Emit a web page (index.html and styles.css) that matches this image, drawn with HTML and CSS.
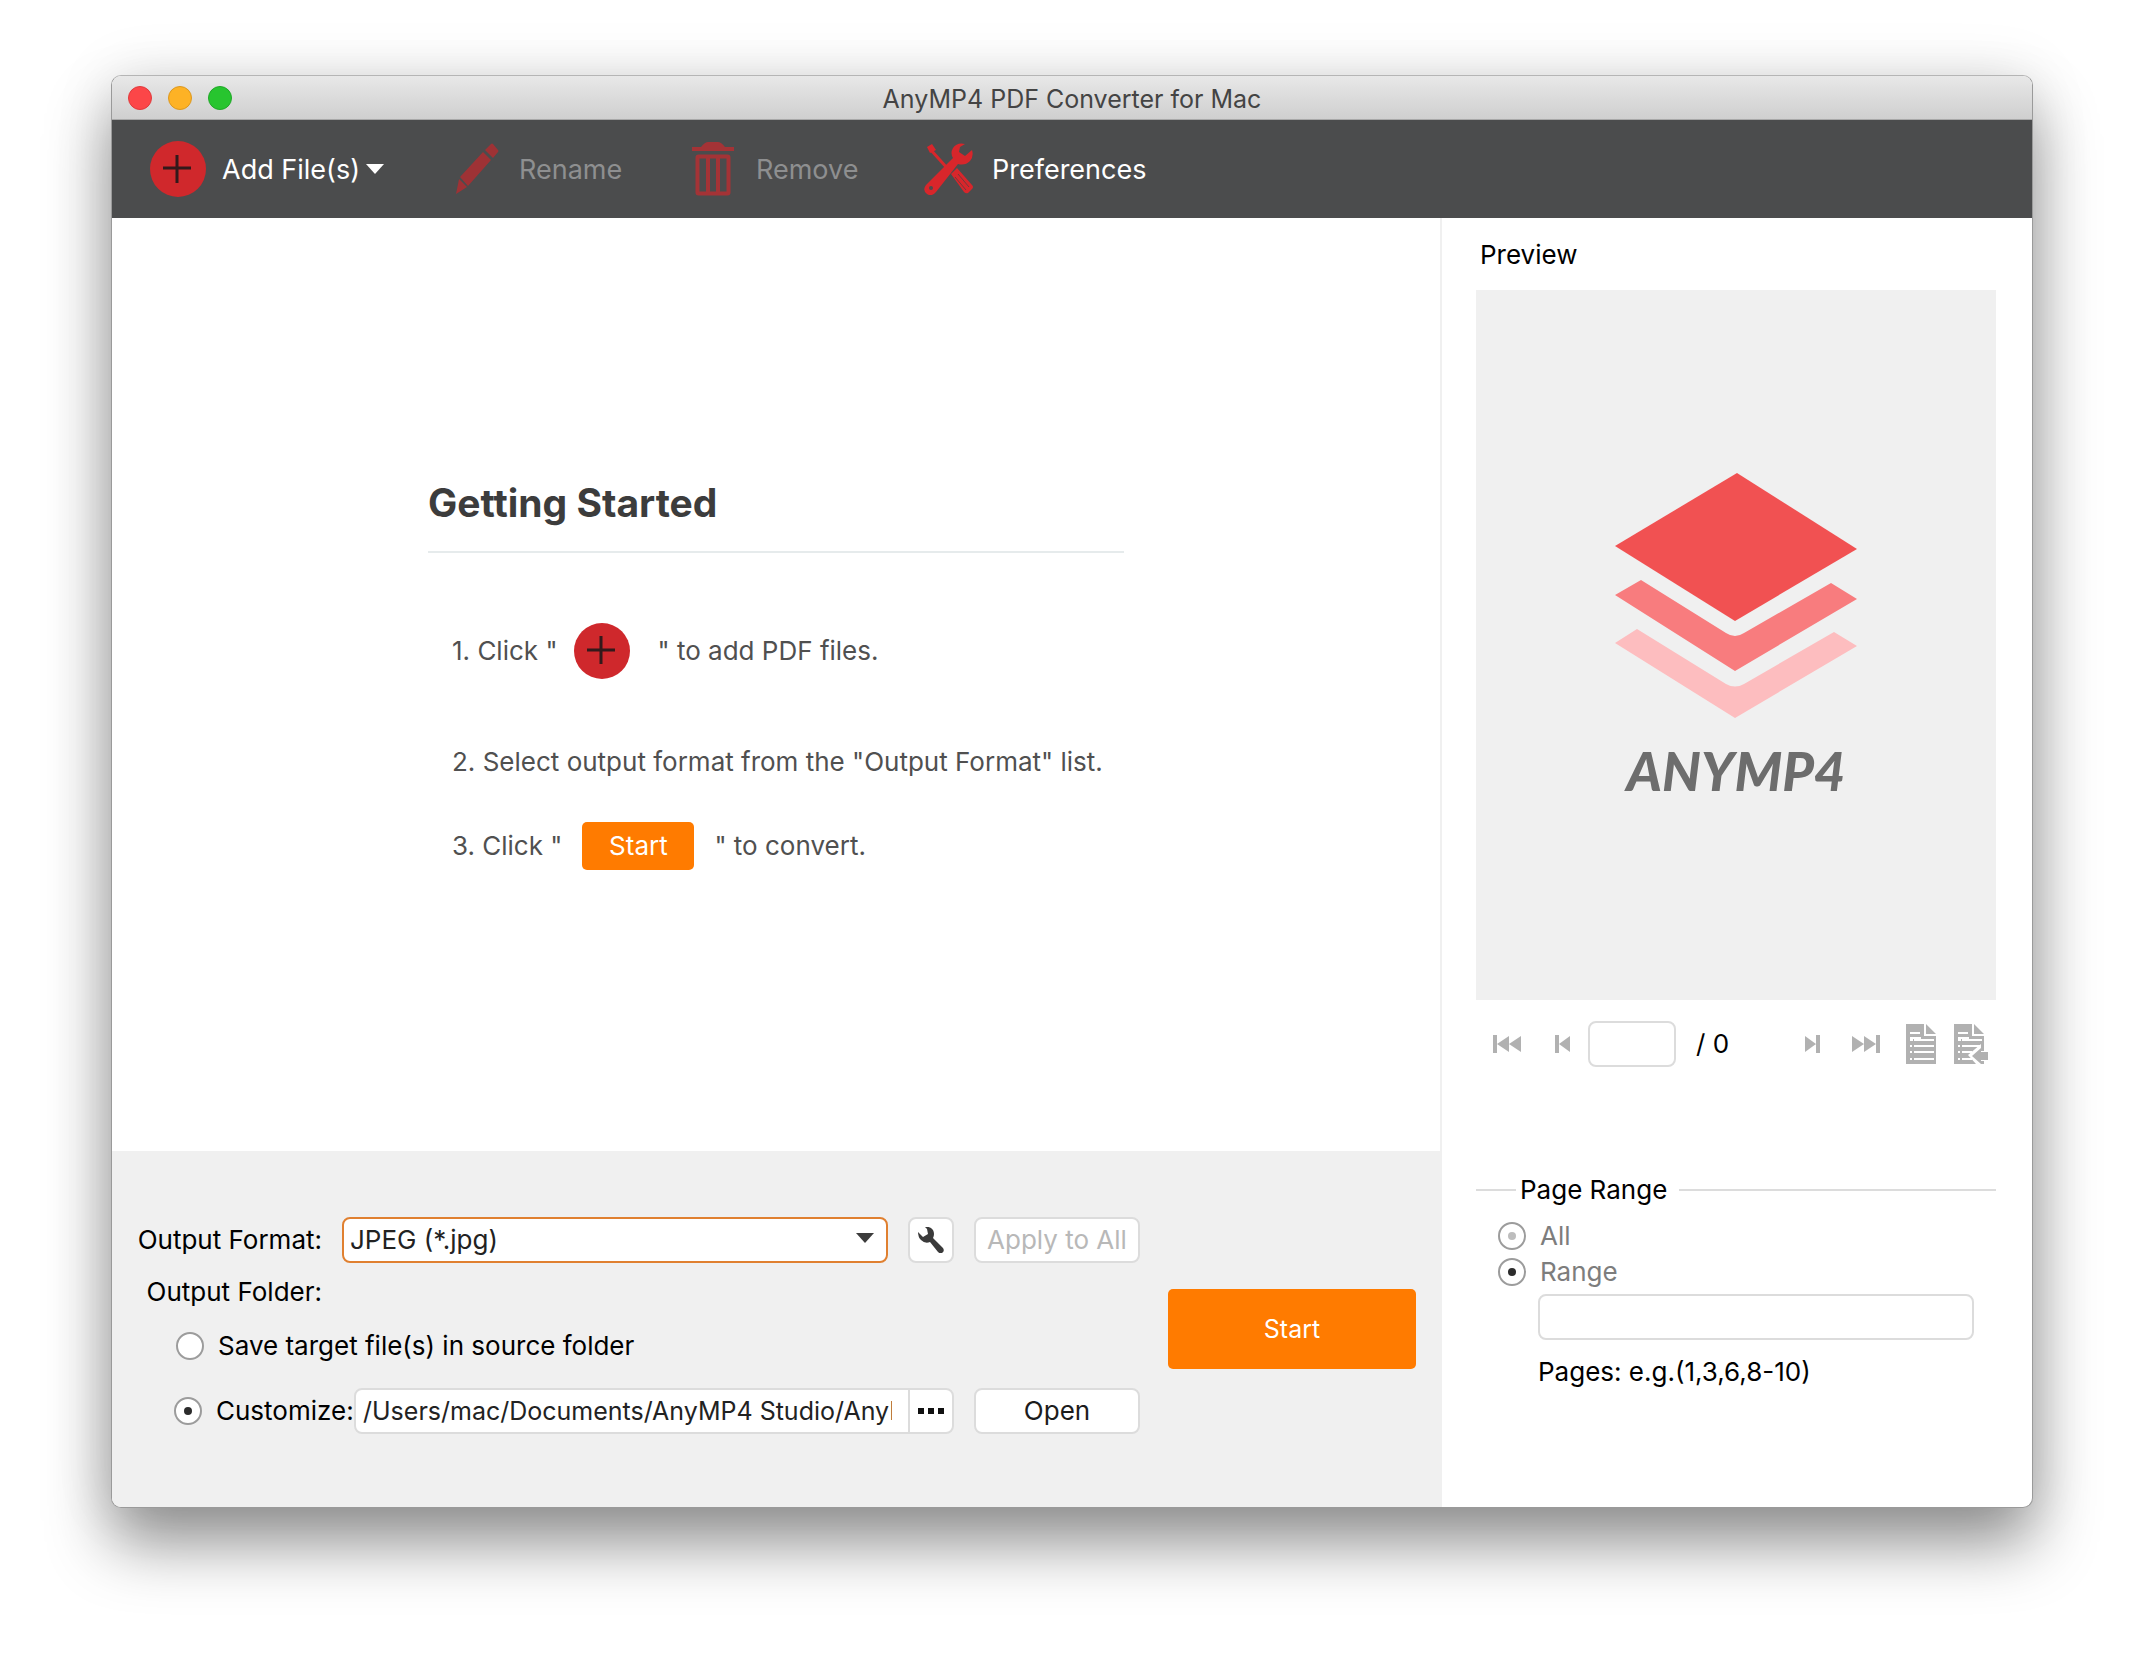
FILE: index.html
```html
<!DOCTYPE html>
<html lang="en">
<head>
<meta charset="utf-8">
<meta name="viewport" content="width=device-width, initial-scale=1">
<title>AnyMP4 PDF Converter for Mac</title>
<link rel="stylesheet" href="styles.css">
</head>
<body>
<div class="window">
  <header class="titlebar">
    <div class="lights">
      <button class="light light-close" type="button" aria-label="Close"></button>
      <button class="light light-minimize" type="button" aria-label="Minimize"></button>
      <button class="light light-zoom" type="button" aria-label="Zoom"></button>
    </div>
    <h1 class="window-title">AnyMP4 PDF Converter for Mac</h1>
  </header>

  <nav class="toolbar" aria-label="Toolbar">
    <button class="tool tool-add" type="button">
      <svg class="plus" viewBox="0 0 56 56" aria-hidden="true"><circle cx="28" cy="28" r="28" fill="#d0282c"/><path d="M27 14v28M13 27h28" stroke="#33191b" stroke-width="3"/></svg>
      <span>Add File(s)</span>
      <svg class="caret" viewBox="0 0 18 10" aria-hidden="true"><path d="M0 0h18L9 10z" fill="#fff"/></svg>
    </button>
    <button class="tool tool-rename" type="button" disabled>
      <svg width="44" height="52" viewBox="0 0 44 52" aria-hidden="true"><path d="M36 1q1-1 2 0l5 6q1 1 0 2l-5 6-8-8zM28 9l8 8-23 26-8-9zM4 36l8 8-11 7z" fill="#9e3235"/></svg>
      <span>Rename</span>
    </button>
    <button class="tool tool-remove" type="button" disabled>
      <svg width="42" height="54" viewBox="0 0 42 54" aria-hidden="true"><path d="M0 5h9q4-5 7-5h10q3 0 7 5h9v4H0z" fill="#a43336"/><path d="M5.500 15.500q0-1 1-1h29q1 0 1 1v35q0 1-1 1h-29q-1 0-1-1zM16 15v36M26 15v36" fill="none" stroke="#a43336" stroke-width="4"/></svg>
      <span>Remove</span>
    </button>
    <button class="tool tool-prefs" type="button">
      <svg width="50" height="52" viewBox="0 0 50 52" aria-hidden="true"><path d="M6 6l18 20" stroke="#d8262b" stroke-width="3"/><path d="M3 4l5-3 4 6-6 3z" fill="#d8262b"/><path d="M27 31l6-6 15 17q2 2 0 4l-4 4q-2 1-4-1z" fill="#d8262b"/><path d="M34 31l11 13M31 34l11 13" stroke="#74383b" stroke-width="1"/><path d="M41 1q-8-2-12 4-3 5 0 10L2 42q-4 5 1 9 5 3 9-2l22-28q7 2 12-3 4-5 2-11l-7 6-6-4 1-5z" fill="#d8262b"/><circle cx="7" cy="45" r="2" fill="#4b4c4d"/></svg>
      <span>Preferences</span>
    </button>
  </nav>

  <div class="content">
    <main class="workspace">
      <section class="start-area">
        <div class="guide">
          <h2 class="guide-title">Getting Started</h2>
          <ol class="steps">
            <li class="step step-add"><span>1. Click "</span><svg class="plus" viewBox="0 0 56 56" aria-hidden="true"><circle cx="28" cy="28" r="28" fill="#cf282c"/><path d="M27 13v28M13 27h28" stroke="#33191b" stroke-width="3"/></svg><span>" to add PDF files.</span></li>
            <li class="step">2. Select output format from the "Output Format" list.</li>
            <li class="step step-convert"><span>3. Click "</span><span class="start-chip">Start</span><span>" to convert.</span></li>
          </ol>
        </div>
      </section>

      <form class="output">
        <div class="fields">
          <div class="row">
            <label class="field-label" for="format">Output Format:</label>
            <div class="select-wrap">
              <select class="select" id="format"><option>JPEG (*.jpg)</option></select>
              <svg class="select-arrow" viewBox="0 0 18 10" aria-hidden="true"><path d="M0 0h18L9 10z" fill="#3c3c3c"/></svg>
            </div>
            <button class="btn btn-square" type="button" aria-label="Format settings">
              <svg width="26" height="26" viewBox="0 0 26 26" aria-hidden="true"><path d="M7 0q5-1 8 3 2 4 0 8l10 10q2 3-1 5-2 1-4-1L12 15q-5 2-9-2-3-3-3-8l5 5 5-3-1-5z" fill="#3a3a3a"/></svg>
            </button>
            <button class="btn btn-wide" type="button" disabled>Apply to All</button>
          </div>
          <div class="field-label folder-label">Output Folder:</div>
          <label class="radio-row source-row"><input class="radio" type="radio" name="folder"><span>Save target file(s) in source folder</span></label>
          <div class="row custom-row">
            <label class="radio-row custom-choice"><input class="radio" type="radio" name="folder" checked><span>Customize:</span></label>
            <div class="path-group">
              <input class="path-input" type="text" aria-label="Folder path" value="/Users/mac/Documents/AnyMP4 Studio/AnyMP4 PDF Converter">
              <button class="path-more" type="button" aria-label="Choose folder">
                <svg width="26" height="6" viewBox="0 0 26 6" aria-hidden="true"><path d="M0 0h6v6H0zM10 0h6v6h-6zM20 0h6v6h-6z" fill="#111"/></svg>
              </button>
            </div>
            <button class="btn btn-wide" type="button">Open</button>
          </div>
        </div>
        <button class="start" type="button">Start</button>
      </form>
    </main>

    <aside class="side">
      <h2 class="side-title">Preview</h2>
      <div class="preview">
        <svg class="logo" viewBox="0 0 242 246" aria-hidden="true"><path d="M122 0l120 76-122 72L0 73z" fill="#f15152"/><path d="M26 107l85 53q9 6 18 0l87-50 26 16-122 72L0 122z" fill="#f87c7e"/><path d="M22 156l89 55q9 5 18 0l90-52 23 14-122 72L0 170z" fill="#fdbdbf"/></svg>
        <span class="logo-name">ANYMP4</span>
      </div>
      <div class="pager">
        <button class="icon-btn" type="button" aria-label="First page"><svg width="28" height="18" viewBox="0 0 28 18"><path d="M0 0h4v18H0zM4 9L16 1v16zM16 9l12-8v16z" fill="#b1b1b1"/></svg></button>
        <button class="icon-btn pager-prev" type="button" aria-label="Previous page"><svg width="15" height="18" viewBox="0 0 15 18"><path d="M0 0h4v18H0zM4 9l11-8v16z" fill="#b1b1b1"/></svg></button>
        <input class="text-input page-input" type="text" aria-label="Page number">
        <span class="page-total">/ 0</span>
        <button class="icon-btn pager-next" type="button" aria-label="Next page"><svg width="15" height="18" viewBox="0 0 15 18"><path d="M11 0h4v18h-4zM11 9L0 1v16z" fill="#b1b1b1"/></svg></button>
        <button class="icon-btn pager-last" type="button" aria-label="Last page"><svg width="28" height="18" viewBox="0 0 28 18"><path d="M24 0h4v18h-4zM24 9L12 1v16zM12 9L0 1v16z" fill="#b1b1b1"/></svg></button>
        <button class="icon-btn pager-doc" type="button" aria-label="Current page"><svg width="30" height="40" viewBox="0 0 30 40"><path d="M0 0h18v12h12v28H0zM20 0l10 10H20z" fill="#b1b1b1"/><path d="M4 9h10M4 14h11M4 16h3M8 16h20M4 22h2M8 22h20M4 28h2M8 28h20M4 35h2M8 35h20" stroke="#fff" stroke-width="2"/></svg></button>
        <button class="icon-btn pager-export" type="button" aria-label="Selected pages"><svg width="34" height="40" viewBox="0 0 34 40"><path d="M0 0h18v12h12v28H0zM20 0l10 10H20z" fill="#b1b1b1"/><path d="M4 9h10M4 14h11M4 16h3M8 16h20M4 22h2M8 22h18M4 28h2M8 28h10M4 35h2M8 35h10" stroke="#fff" stroke-width="2"/><path d="M14 31L27 20v7h7v10h-7v3h-5z" fill="#fff"/><path d="M18 32l9-8v4h7v8h-7v4z" fill="#b1b1b1"/></svg></button>
      </div>
      <fieldset class="range">
        <legend class="range-title">Page Range</legend>
        <label class="radio-row range-choice"><input class="radio radio-faint" type="radio" name="pages"><span>All</span></label>
        <label class="radio-row range-choice"><input class="radio" type="radio" name="pages" checked><span>Range</span></label>
        <div class="range-fields">
          <input class="text-input range-input" id="range" type="text">
          <label class="range-hint" for="range">Pages: e.g.(1,3,6,8-10)</label>
        </div>
      </fieldset>
    </aside>
  </div>
</div>
</body>
</html>
```
FILE: styles.css
```css
* { box-sizing: border-box; }

body {
  margin: 0;
  min-height: 100vh;
  padding: 75px 111px 146px;
  display: flex;
  background: #fff;
  color: #000;
  font: 26px/32px Inter, "Liberation Sans", sans-serif;
}

button, input, select { font: inherit; color: inherit; margin: 0; }
button { padding: 0; border: 0; background: none; }
svg { display: block; flex: none; }
h1, h2 { margin: 0; font-weight: 400; font-size: inherit; }

.window {
  flex: 1;
  min-width: 0;
  display: flex;
  flex-direction: column;
  border: 1px solid #9a9a9a;
  border-top-color: #b5b5b5;
  border-radius: 10px;
  overflow: hidden;
  background: #fff;
  box-shadow: 0 36px 64px rgba(0, 0, 0, .42), 0 0 60px rgba(0, 0, 0, .1);
}

/* Title bar */
.titlebar {
  height: 44px;
  display: grid;
  grid-template-columns: 1fr auto 1fr;
  align-items: center;
  background: linear-gradient(#e8e8e8, #cfcfcf);
  border-bottom: 1px solid #a8a8a8;
}
.lights { display: flex; gap: 16px; padding-left: 16px; }
.light { width: 24px; height: 24px; border-radius: 50%; }
.light-close { background: #fc4648; border: 1px solid #e03a3c; }
.light-minimize { background: #fdb225; border: 1px solid #dc981f; }
.light-zoom { background: #27c52f; border: 1px solid #20a828; }
.window-title { color: #444; font-size: 25px; padding-top: 2px; }

/* Toolbar */
.toolbar {
  height: 98px;
  display: flex;
  align-items: center;
  padding: 0 38px;
  background: #4b4c4d;
  color: #fff;
  font-size: 27px;
}
.tool { display: flex; align-items: center; white-space: nowrap; }
.tool span { padding-top: 2px; }
.tool:disabled { color: #8e8f90; }
.plus { width: 56px; height: 56px; }
.tool-add { gap: 16px; width: 305px; }
.caret { width: 18px; height: 10px; margin-left: -10px; }
.tool-rename { gap: 20px; width: 237px; }
.tool-remove { gap: 22px; width: 232px; }
.tool-prefs { gap: 18px; }

/* Main split */
.content { flex: 1; display: flex; min-height: 0; }
.workspace { flex: 1; min-width: 0; display: flex; flex-direction: column; }
.start-area {
  flex: 1;
  display: flex;
  align-items: center;
  justify-content: center;
}
.guide { width: 696px; padding-bottom: 20px; color: #505050; }
.guide-title {
  padding-bottom: 24px;
  border-bottom: 2px solid #e6ebec;
  color: #3c3c3c;
  font-size: 39px;
  line-height: 48px;
  font-weight: 700;
}
.steps { list-style: none; margin: 0; padding: 70px 24px 0; display: grid; gap: 59px; }
.step { display: flex; align-items: center; height: 48px; white-space: nowrap; }
.step:first-child { height: 56px; }
.step:last-child { margin-top: -23px; }
.step-add { gap: 16px; }
.step-add .plus { margin-right: 12px; }
.step-convert { gap: 20px; }
.start-chip {
  width: 112px;
  height: 48px;
  border-radius: 5px;
  background: #ff7b00;
  color: #fff;
  line-height: 48px;
  text-align: center;
}

/* Output settings */
.output {
  display: flex;
  align-items: center;
  gap: 28px;
  padding: 66px 24px 66px;
  background: #f0f0f0;
}
.fields { flex: 1; min-width: 0; padding-bottom: 7px; }
.row { display: flex; align-items: center; gap: 20px; }
.field-label { width: 186px; text-align: right; white-space: nowrap; }
.select-wrap { position: relative; flex: 1; }
.select {
  appearance: none;
  display: block;
  width: 100%;
  height: 46px;
  padding: 0 6px;
  border: 2px solid #e08030;
  border-radius: 8px;
  background: #fff;
  color: #222;
}
.select-arrow { position: absolute; right: 14px; top: 16px; width: 18px; height: 10px; }
.btn {
  height: 46px;
  display: flex;
  align-items: center;
  justify-content: center;
  border: 2px solid #dcdcdc;
  border-radius: 8px;
  background: #fff;
  color: #1c1c1c;
  white-space: nowrap;
}
.btn:disabled { color: #b8b8b8; }
.btn-square { width: 46px; }
.btn-wide { width: 166px; }
.folder-label { margin-top: 13px; }
.radio-row { display: flex; align-items: center; white-space: nowrap; }
.source-row { margin: 22px 0 26px; padding-left: 40px; gap: 14px; }
.custom-row { gap: 20px; }
.custom-choice { padding-left: 38px; gap: 14px; width: 218px; margin-right: -20px; }
.radio {
  appearance: none;
  flex: none;
  width: 28px;
  height: 28px;
  display: grid;
  place-items: center;
  border: 2px solid #9c9c9c;
  border-radius: 50%;
  background: #fff;
}
.radio:checked::before, .radio-faint::before {
  content: "";
  width: 8px;
  height: 8px;
  border-radius: 50%;
  background: #2c2c2c;
}
.radio-faint::before { background: #bdbdbd; }
.path-group {
  flex: 1;
  min-width: 0;
  height: 46px;
  display: flex;
  border: 2px solid #dcdcdc;
  border-radius: 8px;
  overflow: hidden;
  background: #fff;
}
.path-input {
  flex: 1;
  min-width: 0;
  border: 0;
  padding: 0;
  margin: 0 16px 0 7px;
  background: none;
  color: #222;
  font-size: 25px;
}
.path-more {
  width: 44px;
  display: grid;
  place-items: center;
  border-left: 2px solid #dcdcdc;
}
.start {
  width: 248px;
  height: 80px;
  border-radius: 5px;
  background: #ff7b00;
  color: #fff;
  font-size: 25px;
}

/* Side panel */
.side {
  flex: none;
  width: 592px;
  padding: 21px 36px 0 34px;
  border-left: 2px solid #f0f0f0;
}
.side-title { padding-left: 4px; }
.preview {
  height: 710px;
  margin-top: 19px;
  padding-bottom: 14px;
  display: flex;
  flex-direction: column;
  align-items: center;
  justify-content: center;
  gap: 20px;
  background: #f0f0f0;
}
.logo { width: 242px; height: 246px; }
.logo-name {
  color: #6d6d6d;
  font: italic 900 54px/64px Lato, sans-serif;
}
.pager { display: flex; align-items: center; padding: 21px 8px 0 17px; }
.icon-btn { flex: none; }
.text-input {
  height: 46px;
  padding: 0 8px;
  border: 2px solid #dcdcdc;
  border-radius: 8px;
  background: #fff;
}
.pager-prev { margin-left: 34px; }
.page-input { width: 88px; margin: 0 20px 0 18px; }
.page-total { flex: 1; }
.pager-last { margin-left: 32px; }
.pager-doc { margin-left: 26px; }
.pager-export { margin-left: 18px; }

.range {
  margin: 107px 0 0;
  padding: 12px 22px 0;
  border: 0;
  border-top: 2px solid #dcdcdc;
}
.range-title { margin-left: 18px; padding: 0 12px 0 4px; }
.range-choice { gap: 14px; height: 36px; color: #7d7d7d; }
.range-fields { display: flex; flex-direction: column; gap: 16px; padding: 4px 0 0 40px; }
.range-input { width: 100%; }
```
